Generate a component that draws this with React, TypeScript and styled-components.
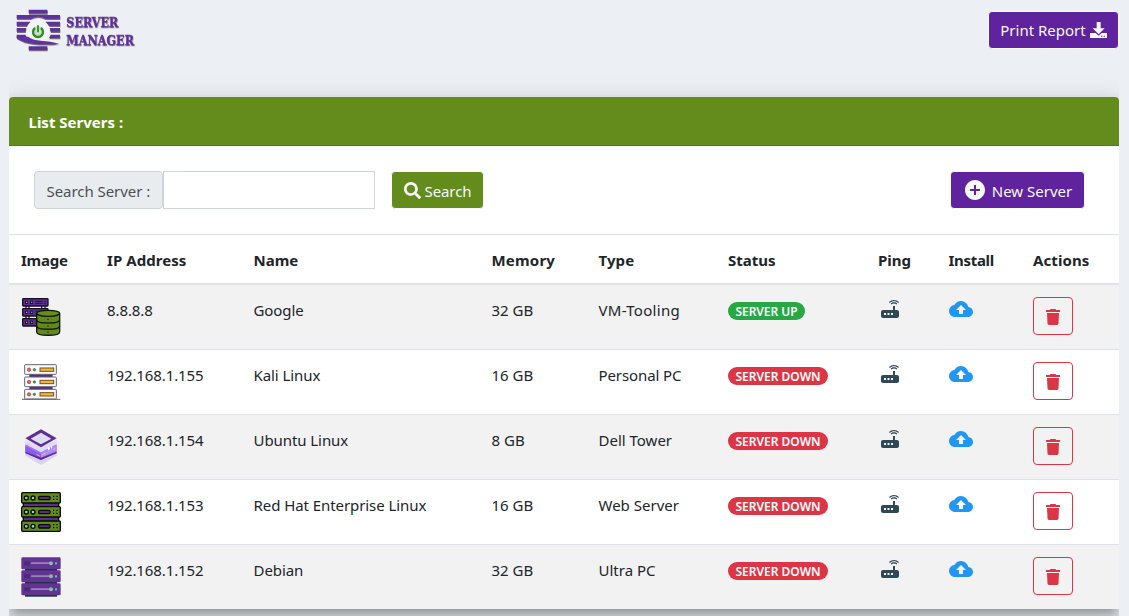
import React from 'react';
import styled, { createGlobalStyle, css } from 'styled-components';
import { FaSearch } from 'react-icons/fa';
import { MdAddCircle, MdCloudUpload, MdRouter } from 'react-icons/md';

const GlobalStyle = createGlobalStyle`
  * { box-sizing: border-box; }
  html, body { margin: 0; height: 100%; overflow: hidden; }
  body {
    background: #ecf0f5;
    color: #212529;
    font-family: "Noto Sans", "Open Sans", sans-serif;
    font-size: 15px;
    line-height: 24px;
  }
`;

const COLUMNS = '86px 146.5px 238px 107px 129.5px 150px 70.5px 84.5px 98px';

const Page = styled.main`
  height: 616px;
  overflow: hidden;
  padding: 0 10px 0 9px;
`;

const TopBar = styled.header`
  display: flex;
  justify-content: space-between;
  align-items: flex-start;
  height: 97px;
  padding-top: 11px;
`;

const LogoSvg = styled.svg`
  display: block;
  margin: -11px 0 0 -9px;
`;

const LogoText = styled.text`
  fill: #60319a;
  stroke: #60319a;
  stroke-width: 0.8px;
  font-family: "DejaVu Serif Condensed", "DejaVu Serif", serif;
  font-weight: 700;
  font-size: 40px;
  filter: drop-shadow(1px 3px 1px rgba(40, 35, 55, 0.6));
`;

const Button = styled.button<{ $tone: 'purple' | 'green'; $width: number; $gap: number }>`
  display: flex;
  align-items: center;
  justify-content: center;
  gap: ${(p) => p.$gap}px;
  width: ${(p) => p.$width}px;
  height: 38px;
  padding: 0;
  border: 1px solid #f8f9fa;
  border-radius: 4px;
  background: ${(p) => (p.$tone === 'purple' ? '#5e239d' : '#638c1c')};
  color: #f8f9fa;
  font: inherit;
  white-space: nowrap;
  svg { flex: none; }
`;

const Label = styled.span<{ $drop?: number; $spacing?: number }>`
  padding-top: ${(p) => p.$drop ?? 0}px;
  letter-spacing: ${(p) => p.$spacing ?? 0}px;
`;

const Card = styled.section`
  height: 512px;
  background: #fff;
  border-radius: 4px 4px 0 0;
  box-shadow: 0 7px 8px -4px rgba(0, 0, 0, 0.2), 0 12px 17px 2px rgba(0, 0, 0, 0.14),
    0 5px 22px 4px rgba(0, 0, 0, 0.12);
  clip-path: inset(-30px 0 -30px 0);
`;

const CardTitle = styled.h1`
  margin: 0;
  height: 49px;
  padding: 13px 19.5px 0;
  background: #638c1c;
  border-bottom: 1px solid #567a18;
  border-radius: 4px 4px 0 0;
  color: #fff;
  font-size: 15px;
  line-height: 24px;
  font-weight: 700;
`;

const Toolbar = styled.div`
  display: flex;
  align-items: flex-start;
  height: 88px;
  padding: 25px 34px 0 25px;
`;

const Addon = styled.label`
  width: 129px;
  height: 38px;
  padding: 7px 0 0 11.5px;
  background: #e9ecef;
  border: 1px solid #ced4da;
  border-radius: 4px;
  color: #495057;
  letter-spacing: -0.05px;
  white-space: nowrap;
`;

const Input = styled.input`
  width: 212px;
  height: 38px;
  margin-right: 16px;
  border: 1px solid #ced4da;
  background: #fff;
  outline: none;
`;

const Spacer = styled.div`
  flex: 1;
`;

const rowGrid = css`
  display: grid;
  grid-template-columns: ${COLUMNS};
`;

const HeadRow = styled.div`
  ${rowGrid}
  height: 51px;
  border-top: 1px solid #dee2e6;
  border-bottom: 2px solid #dee2e6;
  font-weight: 700;
`;

const Row = styled.div<{ $first: boolean; $striped: boolean }>`
  ${rowGrid}
  height: ${(p) => (p.$first ? 64 : 65)}px;
  border-top: ${(p) => (p.$first ? 'none' : '1px solid #dee2e6')};
  background: ${(p) => (p.$striped ? '#f2f2f2' : '#fff')};
`;

const Cell = styled.div<{ $spacing?: number; $top?: number }>`
  padding: ${(p) => p.$top ?? 13}px 0 0 12px;
  letter-spacing: ${(p) => p.$spacing ?? 0}px;
  white-space: nowrap;
  svg { display: block; }
`;

const Badge = styled.span<{ $up: boolean }>`
  display: flex;
  align-items: center;
  justify-content: center;
  width: ${(p) => (p.$up ? 77 : 100)}px;
  height: 18px;
  padding-top: 1px;
  margin-top: 4px;
  border-radius: 9px;
  background: ${(p) => (p.$up ? '#28a745' : '#dc3545')};
  color: #fff;
  font-size: 12px;
  line-height: 17px;
  font-weight: 600;
  letter-spacing: ${(p) => (p.$up ? -0.05 : 0)}px;
`;

const DeleteButton = styled.button`
  display: flex;
  justify-content: center;
  width: 40px;
  height: 38px;
  padding: 11px 0 0;
  border: 1px solid #dc3545;
  border-radius: 4px;
  background: transparent;
  color: #dc3545;
`;

const LogoBars = () => (
  <>
    <path d="M86 29h56v11H86zM50 45h130v11h-44q-22-12-44 0H50zM50 65h42l-12 12H50zM180 65h-44l12 12h32zM50 84h29l-3 11H50zM180 84h-31l3 11h28zM50 104h26l6 10H50zM180 104h-28l-5 10h33zM86 139h56v11H86z" />
    <path d="M50 110h34q14 10 38 12q30 1 56 9q-48 3-76 0q-30-2-52-17z" />
  </>
);

const Logo = () => (
  <LogoSvg width="160" height="70" viewBox="0 0 480 210" role="img" aria-label="Server Manager">
    <g fill="#45434f" opacity="0.75" transform="translate(1 4)"><LogoBars /></g>
    <circle cx="114" cy="91" r="34" fill="#f3f4f7" />
    <g fill="#60319a"><LogoBars /></g>
    <circle cx="114" cy="96" r="18" fill="#d3d8cd" />
    <path d="M105 84a15 15 0 1 0 18 0" fill="none" stroke="#2c8f20" strokeWidth="7" />
    <path d="M114 76v21" stroke="#2fa31f" strokeWidth="6" />
    <LogoText x="199" y="81" textLength="156" lengthAdjust="spacingAndGlyphs">SERVER</LogoText>
    <LogoText x="199" y="134" textLength="203" lengthAdjust="spacingAndGlyphs">MANAGER</LogoText>
  </LogoSvg>
);

const Download = () => (
  <svg width="17" height="16" viewBox="0 0 51 48" fill="currentColor">
    <path d="M20 0h12v19h12L26 37 8 19h12z" />
    <path fillRule="evenodd" d="M0 33h17l9 8 9-8h16v15H0zM33 41v3h4v-3zM41 41v3h4v-3z" />
  </svg>
);

const Trash = () => (
  <svg width="14" height="16" viewBox="0 0 14 16" fill="currentColor">
    <path d="M0 1h3.700l.8-1h5l.8 1H14v2H0zM1 4h12l-.5 10.600q-.1 1.400-1.500 1.400H3q-1.400 0-1.500-1.400z" />
  </svg>
);

const DatabaseImage = () => (
  <svg width="40" height="40" viewBox="0 0 120 120">
    <path d="M15 26v40M24 26v40M62 26v10M72 26v10" stroke="#17131d" strokeWidth="4" />
    {[5, 35, 65].map((y) => (
      <g key={y}>
        <rect x="5" y={y} width="76" height="22" rx="2" fill="#5b2e91" stroke="#15101c" strokeWidth="4" />
        <rect x="12" y={y + 6} width="9" height="10" fill="#18101f" />
        <rect x="15" y={y + 9} width="4" height="4" fill="#ff8f68" />
        <rect x="27" y={y + 6} width="9" height="10" fill="#18101f" />
        <rect x="30" y={y + 9} width="4" height="4" fill="#37d44b" />
        <path d={`M43 ${y + 8}h22M43 ${y + 14}h22M70 ${y + 8}h5M70 ${y + 14}h5`} stroke="#1c1126" strokeWidth="2.500" />
      </g>
    ))}
    <path d="M47 49v56c0 13 69 13 69 0V49" fill="#61891c" stroke="#111708" strokeWidth="4" />
    <ellipse cx="81.500" cy="49" rx="34.500" ry="9" fill="#658e1e" stroke="#111708" strokeWidth="4" />
    <path d="M47 68c0 13 69 13 69 0M47 87c0 13 69 13 69 0" fill="none" stroke="#111708" strokeWidth="4" />
    <path d="M79 67h4M79 87h4M79 105h4" stroke="#111708" strokeWidth="3" />
  </svg>
);

const WhiteRackImage = () => (
  <svg width="40" height="40" viewBox="0 0 120 120">
    <path d="M25 36h70v10H25zM25 73h70v10H25z" fill="#562b8a" />
    {[8, 45, 82].map((y) => (
      <g key={y}>
        <rect x="11" y={y} width="95" height="29" rx="2" fill="#fafafc" stroke="#69656e" strokeWidth="3" />
        <circle cx="24" cy={y + 15} r="5" fill="#f46a5c" stroke="#7d3838" strokeWidth="2" />
        <circle cx="40" cy={y + 15} r="3.500" fill="#38a249" stroke="#2e6338" strokeWidth="2" />
        <rect x="57" y={y + 10} width="41" height="10" fill="#f9b62f" stroke="#6b5326" strokeWidth="3" />
      </g>
    ))}
    <path d="M3 112h115" stroke="#66636b" strokeWidth="3" />
  </svg>
);

const LayersImage = () => (
  <svg width="40" height="40" viewBox="0 0 120 120">
    <path d="M13 72l47 22 47-22v14l-47 28-47-28z" fill="#d8d2ef" />
    <path d="M13 38l47 22 47-22v16l-47 26-47-26z" fill="#e0daf5" />
    <path d="M13 52l47 24 47-24v24l-47 23-47-23z" fill="#a276f4" />
    <path d="M13 57l47 24v14L13 75z" fill="#8a5cec" />
    <path d="M60 79l47-25v15L60 92z" fill="#b48cfb" />
    <path d="M13 74l47 18 47-18v5l-47 20-47-20z" fill="#5b2e92" />
    <path d="M60 7l47 27-47 27L13 34z" fill="#5c2e91" />
    <path d="M60 17l31 18-31 17-31-17z" fill="#dedcf8" />
    <path d="M47 82l9 5M64 83l10-5M22 52l5 3M97 68l5-3M22 85l5 3" stroke="#efbd78" strokeWidth="3" />
    <path d="M83 60v10M80 65h7M92 58v6" stroke="#fff" strokeWidth="3" />
  </svg>
);

const GreenRackImage = () => (
  <svg width="40" height="40" viewBox="0 0 120 120">
    <path d="M7 30h106v60H7z" fill="#583087" stroke="#090b05" strokeWidth="4" />
    {[2, 44, 87].map((y) => (
      <g key={y}>
        <rect x="2" y={y} width="116" height="31" rx="3" fill="#628b1b" stroke="#070905" strokeWidth="4" />
        <circle cx="16" cy={y + 16} r="6" fill="#7de5b6" stroke="#070905" strokeWidth="4" />
        <circle cx="36" cy={y + 16} r="6" fill="#7de5b6" stroke="#070905" strokeWidth="4" />
        <rect x="53" y={y + 11} width="34" height="10" rx="3" fill="#55307f" stroke="#070905" strokeWidth="4" />
        <path d={`M96 ${y + 11}h4M106 ${y + 11}h4M96 ${y + 20}h4M106 ${y + 20}h4`} stroke="#070905" strokeWidth="4" />
      </g>
    ))}
  </svg>
);

const PurpleRackImage = () => (
  <svg width="40" height="40" viewBox="0 0 120 120">
    <path d="M12 34h96v85H12z" fill="#142d33" />
    {[1, 40, 79].map((y) => (
      <g key={y}>
        <rect x="1" y={y} width="118" height="36" rx="4" fill="#613393" />
        <path d={`M12 ${y + 12}v12M18 ${y + 12}v12M24 ${y + 12}v12`} stroke="#45276d" strokeWidth="4" />
        <path d={`M32 ${y + 17.5}h52`} stroke="#9d82b8" strokeWidth="5" strokeLinecap="round" />
        <circle cx="90" cy={y + 17.5} r="6" fill="#8fbba8" />
        <rect x="102" y={y + 15} width="6" height="6" fill="#43d9a0" />
      </g>
    ))}
  </svg>
);

const HEADERS: [string, number][] = [
  ['Image', -0.25], ['IP Address', 0.06], ['Name', 0], ['Memory', 0.2], ['Type', 0.1],
  ['Status', 0], ['Ping', 0], ['Install', -0.3], ['Actions', 0.1],
];

const SERVERS = [
  { image: DatabaseImage, ip: '8.8.8.8', name: 'Google', memory: '32 GB', type: 'VM-Tooling', typeSpacing: 0.3, up: true },
  { image: WhiteRackImage, ip: '192.168.1.155', name: 'Kali Linux', memory: '16 GB', type: 'Personal PC', typeSpacing: -0.1, up: false },
  { image: LayersImage, ip: '192.168.1.154', name: 'Ubuntu Linux', memory: '8 GB', type: 'Dell Tower', typeSpacing: 0, up: false },
  { image: GreenRackImage, ip: '192.168.1.153', name: 'Red Hat Enterprise Linux', memory: '16 GB', type: 'Web Server', typeSpacing: 0, up: false },
  { image: PurpleRackImage, ip: '192.168.1.152', name: 'Debian', memory: '32 GB', type: 'Ultra PC', typeSpacing: 0, up: false },
];

export default function App() {
  return (
    <>
      <GlobalStyle />
      <Page>
        <TopBar>
          <Logo />
          <Button $tone="purple" $width={131} $gap={4}>
            <Label>Print Report</Label>
            <Download />
          </Button>
        </TopBar>
        <Card>
          <CardTitle>List Servers :</CardTitle>
          <Toolbar>
            <Addon htmlFor="search">Search Server :</Addon>
            <Input id="search" />
            <Button $tone="green" $width={93} $gap={4}>
              <FaSearch size={17} />
              <Label $drop={2} $spacing={-0.1}>Search</Label>
            </Button>
            <Spacer />
            <Button $tone="purple" $width={135} $gap={5}>
              <MdAddCircle size={24} />
              <Label $drop={2}>New Server</Label>
            </Button>
          </Toolbar>
          <HeadRow>
            {HEADERS.map(([title, spacing]) => (
              <Cell key={title} $spacing={spacing}>{title}</Cell>
            ))}
          </HeadRow>
          {SERVERS.map((server, i) => (
            <Row key={server.ip} $first={i === 0} $striped={i % 2 === 0}>
              <Cell $top={12}><server.image /></Cell>
              <Cell $spacing={-0.1}>{server.ip}</Cell>
              <Cell $spacing={-0.07}>{server.name}</Cell>
              <Cell>{server.memory}</Cell>
              <Cell $spacing={server.typeSpacing}>{server.type}</Cell>
              <Cell><Badge $up={server.up}>{server.up ? 'SERVER UP' : 'SERVER DOWN'}</Badge></Cell>
              <Cell $top={12}><MdRouter size={24} color="#2f4858" /></Cell>
              <Cell $top={12}><MdCloudUpload size={24} color="#2196f3" /></Cell>
              <Cell $top={12}>
                <DeleteButton aria-label={`Delete ${server.name}`}><Trash /></DeleteButton>
              </Cell>
            </Row>
          ))}
        </Card>
      </Page>
    </>
  );
}
